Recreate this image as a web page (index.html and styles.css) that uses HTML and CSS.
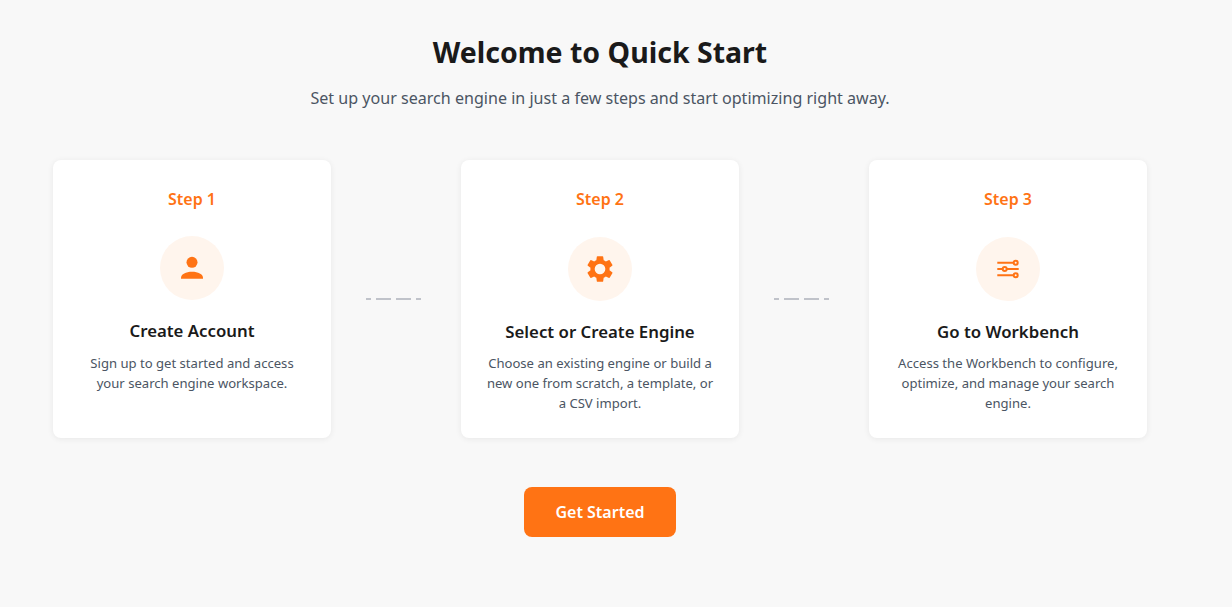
FILE: index.html
```html
<!DOCTYPE html>
<html lang="en">
<head>
    <meta charset="UTF-8">
    <title>Quick Start</title>
    <link rel="stylesheet" href="styles.css">
</head>
<body>
    <div class="container">
        <h1>Welcome to Quick Start</h1>
        <p class="subtitle">Set up your search engine in just a few steps and start optimizing right away.</p>

        <div class="steps">
            <div class="card">
                <div class="step-label">Step 1</div>
                <div class="icon-circle">
                    <svg viewBox="0 0 24 24" width="24" height="24" fill="#ff7314"><circle cx="12" cy="6.300" r="5.500"/><path d="M1 22.700v-1c0-3.600 5-6 11-6s11 2.400 11 6v1z"/></svg>
                </div>
                <h3>Create Account</h3>
                <p>Sign up to get started and access your search engine workspace.</p>
            </div>
            <svg class="connector" viewBox="0 0 56 2" width="56" height="2"><line x1="0" y1="1" x2="56" y2="1" stroke="#adb1bb" stroke-width="1.500" stroke-dasharray="5 5 15 5 15 5 5"/></svg>
            <div class="card">
                <div class="step-label">Step 2</div>
                <div class="icon-circle">
                    <svg viewBox="0 0 24 24" width="32" height="32" fill="#ff7314"><path d="M19.140 12.940c.04-.3.060-.61.060-.94s-.02-.64-.07-.94l2.030-1.580a.49.49 0 0 0 .12-.61l-1.920-3.320a.49.49 0 0 0-.59-.22l-2.390.96a7 7 0 0 0-1.620-.94l-.36-2.540a.48.48 0 0 0-.48-.41h-3.840a.48.48 0 0 0-.47.41l-.36 2.540a7.200 7.200 0 0 0-1.620.94l-2.390-.96a.49.49 0 0 0-.59.22L2.740 8.870a.48.48 0 0 0 .12.61l2.030 1.580c-.05.3-.09.63-.09.94s.02.64.07.94l-2.030 1.580a.49.49 0 0 0-.12.61l1.920 3.320c.12.22.37.29.59.22l2.390-.96c.5.38 1.030.7 1.620.94l.36 2.540c.05.24.24.41.48.41h3.840c.24 0 .44-.17.47-.41l.36-2.540a6.900 6.900 0 0 0 1.620-.94l2.390.96c.22.08.47 0 .59-.22l1.920-3.320a.48.48 0 0 0-.12-.61zM12 16a4 4 0 1 1 0-8 4 4 0 0 1 0 8z"/></svg>
                </div>
                <h3>Select or Create Engine</h3>
                <p>Choose an existing engine or build a new one from scratch, a template, or a CSV import.</p>
            </div>
            <svg class="connector" viewBox="0 0 56 2" width="56" height="2"><line x1="0" y1="1" x2="56" y2="1" stroke="#adb1bb" stroke-width="1.500" stroke-dasharray="5 5 15 5 15 5 5"/></svg>
            <div class="card">
                <div class="step-label">Step 3</div>
                <div class="icon-circle">
                    <svg viewBox="0 0 24 24" width="24" height="24" fill="none" stroke="#ff7314" stroke-width="2"><path d="M1.300 5.700h16.400M1.300 12h5.400M10.700 12h12M1.300 18.300h16.400"/><circle cx="19.700" cy="5.700" r="2"/><circle cx="8.700" cy="12" r="2"/><circle cx="19.700" cy="18.300" r="2"/></svg>
                </div>
                <h3>Go to Workbench</h3>
                <p>Access the Workbench to configure, optimize, and manage your search engine.</p>
            </div>
        </div>

        <button class="start">Get Started</button>
    </div>
</body>
</html>
```

FILE: styles.css
```css
body { margin: 0; background: #f8f8f8; font-family: "Noto Sans", sans-serif; color: #1a1a1a; }
.container { width: 1200px; padding-top: 32px; display: flex; flex-direction: column; align-items: center; }
h1 { margin: 0; font-size: 28.500px; line-height: 40px; font-weight: 700; }
.subtitle { margin: 14px 0 0; font-size: 16.080px; line-height: 24px; color: #4b5563; }

.steps { display: flex; align-items: center; margin-top: 50px; }
.card { width: 278px; height: 278px; box-sizing: border-box; padding: 28px 24px; background: #fff; border-radius: 8px; box-shadow: 0 1px 6px rgba(0,0,0,0.07); text-align: center; }
.step-label { font-size: 16px; line-height: 22px; font-weight: 600; color: #ff7314; }
.icon-circle { width: 64px; height: 64px; margin: 27px auto 0; border-radius: 50%; background: #fff5ed; display: flex; align-items: center; justify-content: center; }
.card:first-child .icon-circle { margin-top: 26px; }
h3 { margin: 19px 0 0; font-size: 16.800px; line-height: 24px; font-weight: 600; }
.card p { margin: 9px 0 0; font-size: 13.100px; line-height: 20px; color: #4b5563; }
.card:first-child p { margin-top: 10px; }

.connector { margin: 0 39px 0 35px; }

.start { margin-top: 49px; width: 152px; height: 50px; border: none; border-radius: 8px; background: #ff7314; color: white; font-family: inherit; font-size: 16px; font-weight: 600; cursor: pointer; }
```
